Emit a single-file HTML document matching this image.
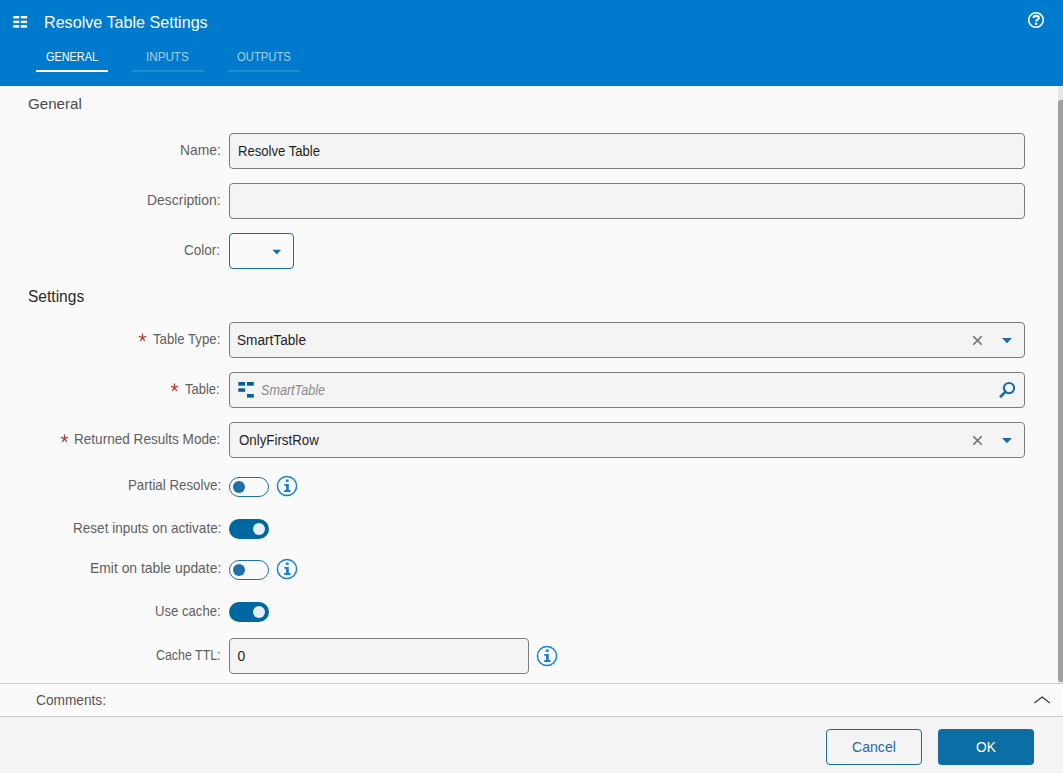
<!DOCTYPE html>
<html><head><meta charset="utf-8">
<style>
*{box-sizing:border-box;margin:0;padding:0}
html,body{width:1063px;height:773px;overflow:hidden;background:#fafafa;font-family:"Liberation Sans",sans-serif}
.a{position:absolute}
.t{position:absolute;white-space:nowrap;transform-origin:0 0}
.hdr{left:0;top:0;width:1063px;height:86px;background:#007acc}
.ul{top:70px;height:2px;width:72px;background:rgba(255,255,255,.13)}
.ul.act{background:#fff}
.box{left:229px;height:36px;border:1px solid #7c7c7c;border-radius:4px;background:#f4f4f4}
.req{position:absolute}
</style></head><body>
<div class="a hdr"></div>
<svg class="a" style="left:13px;top:15px" width="16" height="14" viewBox="0 0 16 14">
<g fill="#fff">
<rect x="0.3" y="1" width="6" height="2.4"/><rect x="7.8" y="1" width="6.3" height="2.4"/>
<rect x="0.3" y="5.7" width="6" height="2.4"/><rect x="7.8" y="5.7" width="6.3" height="2.4"/>
<rect x="0.3" y="10.1" width="6" height="2.6"/><rect x="7.8" y="10.1" width="6.3" height="2.6"/>
</g></svg>
<svg class="a" style="left:1027px;top:11px" width="18" height="18" viewBox="0 0 18 18">
<circle cx="9" cy="9" r="7.3" fill="none" stroke="#fff" stroke-width="1.6"/>
<path d="M6.6 7 C6.6 5.6 7.7 4.9 9.2 4.9 C10.7 4.9 11.8 5.7 11.8 6.9 C11.8 8 11 8.5 10.3 8.9 C9.6 9.3 9.3 9.7 9.3 10.6" fill="none" stroke="#fff" stroke-width="2.1"/>
<circle cx="9.1" cy="12.8" r="1.3" fill="#fff"/>
</svg>
<div class="a ul act" style="left:36px"></div>
<div class="a ul" style="left:132px"></div>
<div class="a ul" style="left:228px"></div>

<div class="a" style="left:1058px;top:86px;width:5px;height:597px;background:#e6e6e6"></div>
<div class="a" style="left:1058px;top:100px;width:5px;height:582px;background:#a0a0a0;border-radius:3px 0 0 3px"></div>

<div class="a box" style="top:133px;width:796px"></div>
<div class="a box" style="top:183px;width:796px"></div>
<div class="a box" style="top:233px;width:65px;background:transparent;border-color:#1a6aa8"></div>
<svg class="a" style="left:271px;top:249px" width="12" height="7" viewBox="0 0 12 7"><path d="M1.4 0.8 L10.1 0.8 L5.75 5.4 Z" fill="#1a6aa8"/></svg>

<div class="a box" style="top:322px;width:796px"></div>
<div class="a box" style="top:372px;width:796px"></div>
<div class="a box" style="top:422px;width:796px"></div>
<div class="a box" style="top:638px;width:300px"></div>

<!-- asterisks -->
<svg class="a" style="left:138px;top:333px" width="9" height="9" viewBox="0 0 9 9"><path d="M4.5 0.6 V4.5 M4.5 4.5 L0.9 3.3 M4.5 4.5 L8.1 3.3 M4.5 4.5 L2.3 7.9 M4.5 4.5 L6.7 7.9" stroke="#b8322a" stroke-width="1.25"/></svg>
<svg class="a" style="left:170px;top:383px" width="9" height="9" viewBox="0 0 9 9"><path d="M4.5 0.6 V4.5 M4.5 4.5 L0.9 3.3 M4.5 4.5 L8.1 3.3 M4.5 4.5 L2.3 7.9 M4.5 4.5 L6.7 7.9" stroke="#b8322a" stroke-width="1.25"/></svg>
<svg class="a" style="left:60.2px;top:434px" width="9" height="9" viewBox="0 0 9 9"><path d="M4.5 0.6 V4.5 M4.5 4.5 L0.9 3.3 M4.5 4.5 L8.1 3.3 M4.5 4.5 L2.3 7.9 M4.5 4.5 L6.7 7.9" stroke="#b8322a" stroke-width="1.25"/></svg>

<!-- select icons -->
<svg class="a" style="left:972px;top:335px" width="11" height="11" viewBox="0 0 11 11"><path d="M1.3 1.3 L9.7 9.7 M9.7 1.3 L1.3 9.7" stroke="#6e6e6e" stroke-width="1.6"/></svg>
<svg class="a" style="left:1001px;top:337px" width="12" height="7" viewBox="0 0 12 7"><path d="M1 1 L11 1 L6 6.3 Z" fill="#1a6aa8"/></svg>
<svg class="a" style="left:972px;top:435px" width="11" height="11" viewBox="0 0 11 11"><path d="M1.3 1.3 L9.7 9.7 M9.7 1.3 L1.3 9.7" stroke="#6e6e6e" stroke-width="1.6"/></svg>
<svg class="a" style="left:1001px;top:437px" width="12" height="7" viewBox="0 0 12 7"><path d="M1 1 L11 1 L6 6.3 Z" fill="#1a6aa8"/></svg>
<!-- table icon -->
<svg class="a" style="left:238px;top:382px" width="17" height="16" viewBox="0 0 17 16"><g fill="#005ea6">
<rect x="0.3" y="0" width="6.8" height="3.7"/><rect x="9" y="0" width="6.8" height="3.7"/>
<rect x="0.3" y="6.3" width="6.8" height="3.5"/><rect x="9" y="12" width="6.8" height="3.6"/></g></svg>
<!-- search icon -->
<svg class="a" style="left:998px;top:380px" width="18" height="18" viewBox="0 0 18 18"><circle cx="11" cy="8.1" r="5.1" fill="none" stroke="#116aac" stroke-width="2.1"/><path d="M7.6 11.6 L2.7 16.5" stroke="#116aac" stroke-width="2.5" stroke-linecap="round"/></svg>
<!-- toggles -->
<div class="a" style="left:229px;top:477px;width:40px;height:20px;border:1.5px solid #1e6fab;border-radius:10px"></div>
<div class="a" style="left:233px;top:481px;width:12px;height:12px;border-radius:6px;background:#1e6fab"></div>
<div class="a" style="left:229px;top:519px;width:40px;height:20px;border-radius:10px;background:#0067a1"></div>
<div class="a" style="left:253px;top:523px;width:12px;height:12px;border-radius:6px;background:#e6eef7"></div>
<div class="a" style="left:229px;top:560px;width:40px;height:20px;border:1.5px solid #1e6fab;border-radius:10px"></div>
<div class="a" style="left:233px;top:564px;width:12px;height:12px;border-radius:6px;background:#1e6fab"></div>
<div class="a" style="left:229px;top:602px;width:40px;height:20px;border-radius:10px;background:#0067a1"></div>
<div class="a" style="left:253px;top:606px;width:12px;height:12px;border-radius:6px;background:#e6eef7"></div>
<!-- info icons -->
<svg class="a" style="left:276px;top:475px" width="22" height="22" viewBox="0 0 22 22"><circle cx="11" cy="11" r="9.6" fill="none" stroke="#1a80d0" stroke-width="1.5"/><g fill="#1a80d0"><rect x="9.8" y="4.5" width="2.8" height="2.4"/><path d="M8.2 8.9 H12.8 V15.1 H14.5 V17.1 H8.2 V15.1 H10.0 V10.8 H8.2 Z"/></g></svg>
<svg class="a" style="left:276px;top:558px" width="22" height="22" viewBox="0 0 22 22"><circle cx="11" cy="11" r="9.6" fill="none" stroke="#1a80d0" stroke-width="1.5"/><g fill="#1a80d0"><rect x="9.8" y="4.5" width="2.8" height="2.4"/><path d="M8.2 8.9 H12.8 V15.1 H14.5 V17.1 H8.2 V15.1 H10.0 V10.8 H8.2 Z"/></g></svg>
<svg class="a" style="left:536px;top:645px" width="22" height="22" viewBox="0 0 22 22"><circle cx="11" cy="11" r="9.6" fill="none" stroke="#1a80d0" stroke-width="1.5"/><g fill="#1a80d0"><rect x="9.8" y="4.5" width="2.8" height="2.4"/><path d="M8.2 8.9 H12.8 V15.1 H14.5 V17.1 H8.2 V15.1 H10.0 V10.8 H8.2 Z"/></g></svg>

<!-- comments / footer -->
<div class="a" style="left:0;top:683px;width:1063px;height:1px;background:#c9c9c9"></div>
<svg class="a" style="left:1032px;top:694px" width="20" height="11" viewBox="0 0 20 11"><path d="M2.4 9.0 L10.1 3.0 L17.8 9.0" fill="none" stroke="#333" stroke-width="1.1"/></svg>
<div class="a" style="left:0;top:716px;width:1063px;height:57px;background:#f4f4f4;border-top:1px solid #c9c9c9"></div>
<div class="a" style="left:826px;top:729px;width:96px;height:36px;border:1px solid #1a6aa8;border-radius:4px"></div>
<div class="a" style="left:938px;top:729px;width:96px;height:36px;border-radius:4px;background:#0d6da5"></div>
<div id="title" class="t" style="left:43.81px;top:14.79px;font-size:16.60px;line-height:16.60px;color:#fff;transform:scaleX(0.9714);">Resolve Table Settings</div>
<div id="tab1" class="t" style="left:46.36px;top:51.26px;font-size:12.40px;line-height:12.40px;color:#fff;transform:scaleX(0.8781);">GENERAL</div>
<div id="tab2" class="t" style="left:146.12px;top:51.26px;font-size:12.40px;line-height:12.40px;color:#a6d0f0;transform:scaleX(0.9411);">INPUTS</div>
<div id="tab3" class="t" style="left:237.13px;top:51.26px;font-size:12.40px;line-height:12.40px;color:#a6d0f0;transform:scaleX(0.9086);">OUTPUTS</div>
<div id="secG" class="t" style="left:28.05px;top:97.39px;font-size:14.60px;line-height:14.60px;color:#4a4a4a;transform:scaleX(1.0357);">General</div>
<div id="secS" class="t" style="left:28.05px;top:288.84px;font-size:15.60px;line-height:15.60px;color:#2a2a2a;transform:scaleX(0.9968);">Settings</div>
<div id="lName" class="t" style="left:179.74px;top:144.38px;font-size:13.90px;line-height:13.90px;color:#606060;transform:scaleX(0.9958);">Name:</div>
<div id="lDesc" class="t" style="left:146.66px;top:194.09px;font-size:13.90px;line-height:13.90px;color:#606060;transform:scaleX(1.0029);">Description:</div>
<div id="lColor" class="t" style="left:184.36px;top:244.38px;font-size:13.90px;line-height:13.90px;color:#606060;transform:scaleX(0.9726);">Color:</div>
<div id="lTT" class="t" style="left:152.98px;top:333.08px;font-size:13.90px;line-height:13.90px;color:#606060;transform:scaleX(0.9515);">Table Type:</div>
<div id="lT" class="t" style="left:185.13px;top:383.08px;font-size:13.90px;line-height:13.90px;color:#606060;transform:scaleX(0.9334);">Table:</div>
<div id="lRRM" class="t" style="left:74.43px;top:432.58px;font-size:13.90px;line-height:13.90px;color:#606060;transform:scaleX(0.9770);">Returned Results Mode:</div>
<div id="lPR" class="t" style="left:127.97px;top:479.19px;font-size:13.90px;line-height:13.90px;color:#606060;transform:scaleX(0.9579);">Partial Resolve:</div>
<div id="lRI" class="t" style="left:72.51px;top:521.88px;font-size:13.90px;line-height:13.90px;color:#606060;transform:scaleX(0.9760);">Reset inputs on activate:</div>
<div id="lEm" class="t" style="left:89.97px;top:561.78px;font-size:13.90px;line-height:13.90px;color:#606060;transform:scaleX(1.0001);">Emit on table update:</div>
<div id="lUC" class="t" style="left:154.89px;top:604.68px;font-size:13.90px;line-height:13.90px;color:#606060;transform:scaleX(0.9442);">Use cache:</div>
<div id="lTTL" class="t" style="left:155.75px;top:648.88px;font-size:13.90px;line-height:13.90px;color:#606060;transform:scaleX(0.8926);">Cache TTL:</div>
<div id="vName" class="t" style="left:237.58px;top:144.97px;font-size:13.80px;line-height:13.80px;color:#1e1e1e;transform:scaleX(0.9483);">Resolve Table</div>
<div id="vTT" class="t" style="left:237.43px;top:333.97px;font-size:13.80px;line-height:13.80px;color:#1e1e1e;transform:scaleX(0.9885);">SmartTable</div>
<div id="vT" class="t" style="left:261.44px;top:384.17px;font-size:13.80px;line-height:13.80px;color:#8a8a8a;transform:scaleX(0.9133);font-style:italic;">SmartTable</div>
<div id="vRRM" class="t" style="left:238.75px;top:433.97px;font-size:13.80px;line-height:13.80px;color:#1e1e1e;transform:scaleX(0.9639);">OnlyFirstRow</div>
<div id="vTTL" class="t" style="left:237.51px;top:649.97px;font-size:13.80px;line-height:13.80px;color:#1e1e1e;transform:scaleX(1.0000);">0</div>
<div id="com" class="t" style="left:36.36px;top:693.00px;font-size:14.00px;line-height:14.00px;color:#555;transform:scaleX(0.9772);">Comments:</div>
<div id="cancel" class="t" style="left:851.58px;top:741.08px;font-size:13.90px;line-height:13.90px;color:#1a6aa8;transform:scaleX(1.0145);">Cancel</div>
<div id="ok" class="t" style="left:975.58px;top:741.18px;font-size:13.90px;line-height:13.90px;color:#fff;transform:scaleX(0.9906);">OK</div>
</body></html>
